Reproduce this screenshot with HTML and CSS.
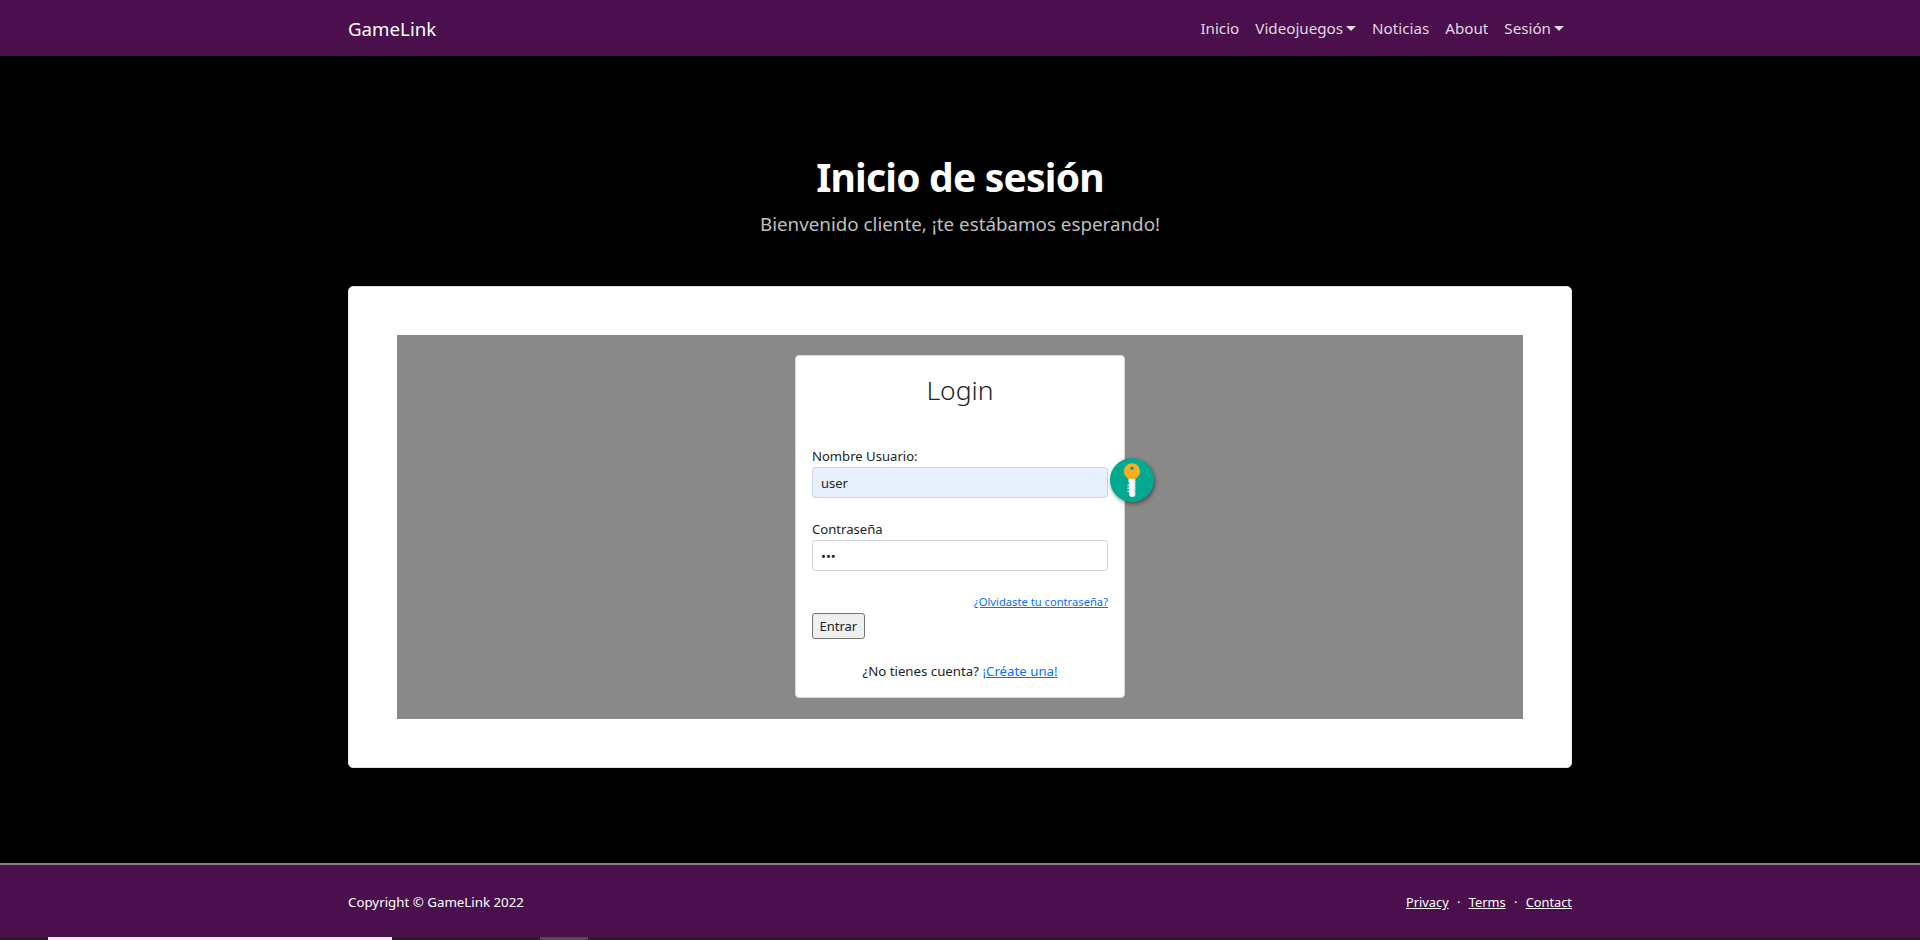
FILE: index.html
```html
<!DOCTYPE html>
<html lang="es">
<head>
    <meta charset="UTF-8">
    <title>GameLink - Inicio de sesión</title>
    <link rel="stylesheet" href="styles.css">
</head>
<body>
    <nav class="navbar">
        <div class="container navbar-inner">
            <a class="brand" href="#">GameLink</a>
            <ul class="nav-links">
                <li><a href="#">Inicio</a></li>
                <li><a class="dropdown" href="#">Videojuegos</a></li>
                <li><a href="#">Noticias</a></li>
                <li><a href="#">About</a></li>
                <li><a class="dropdown" href="#">Sesión</a></li>
            </ul>
        </div>
    </nav>

    <header class="hero">
        <h1>Inicio de sesión</h1>
        <p>Bienvenido cliente, ¡te estábamos esperando!</p>
    </header>

    <main class="container">
        <div class="panel">
            <div class="login-bg">
                <div class="login-card">
                    <h2>Login</h2>
                    <form>
                        <div class="field first">
                            <label for="user">Nombre Usuario:</label>
                            <input class="autofilled" type="text" id="user" value="user">
                            <span class="key-badge">
                                <svg width="44" height="44" viewBox="0 0 44 44">
                                    <path d="M18.500 20h6.700v17.500l-1.300 1.300h-3.300l-1.300-1.300v-3.300h-1.800v-1.400h1.800v-1.800h-1.800v-1.400h1.800v-1.800h-1.800v-1.400h1.800v-1.800h-.8z" fill="#fff"/>
                                    <path d="M23.600 20h1.600v17.500l-1.300 1.300h-.3z" fill="#e3e3e3"/>
                                    <path d="M22 5.300c4.400 0 8 3.500 8 7.900 0 3.600-2.400 6.600-5.700 7.700-.7.300-1.500.4-2.300.4s-1.600-.1-2.300-.4c-3.300-1.100-5.700-4.100-5.700-7.700 0-4.400 3.600-7.900 8-7.900z" fill="#fdb01f"/>
                                    <circle cx="22" cy="10.300" r="1.800" fill="#00a98f"/>
                                </svg>
                            </span>
                        </div>
                        <div class="field">
                            <label for="pass">Contraseña</label>
                            <input type="password" id="pass" value="123">
                        </div>
                        <div class="forgot"><a href="#">¿Olvidaste tu contraseña?</a></div>
                        <button type="button">Entrar</button>
                    </form>
                    <p class="signup">¿No tienes cuenta? <a href="#">¡Créate una!</a></p>
                </div>
            </div>
        </div>
    </main>

    <footer class="footer">
        <div class="container footer-inner">
            <span>Copyright © GameLink 2022</span>
            <span class="footer-links">
                <a href="#">Privacy</a>
                <span class="dot">·</span>
                <a href="#">Terms</a>
                <span class="dot">·</span>
                <a href="#">Contact</a>
            </span>
        </div>
    </footer>

    <div class="taskbar">
        <span class="task-white"></span>
        <span class="task-grey"></span>
    </div>
</body>
</html>
```

FILE: styles.css
```css
* {
    box-sizing: border-box;
}
html, body {
    height: 940px;
    overflow: hidden;
}
body {
    margin: 0;
    background-color: #000;
    color: #212529;
    font-family: "Noto Sans", "Open Sans", sans-serif;
    font-size: 16px;
    line-height: 1.5;
}
a {
    color: #0d6efd;
}
.container {
    width: 1248px;
    margin: 0 auto;
    padding: 0 12px;
}
.navbar {
    height: 56px;
    background-color: #4a0f4c;
}
.navbar-inner {
    display: flex;
    align-items: center;
    justify-content: space-between;
    height: 56px;
    padding-top: 1px;
}
.brand {
    padding-top: 2px;
    color: #fff;
    font-size: 18.700px;
    text-decoration: none;
}
.nav-links {
    display: flex;
    list-style: none;
    margin: 0;
    padding: 0;
}
.nav-links a {
    display: block;
    padding: 8px;
    color: rgba(255, 255, 255, .85);
    font-size: 15.200px;
    text-decoration: none;
}
.dropdown::after {
    content: "";
    display: inline-block;
    margin-left: 3px;
    vertical-align: 3px;
    border-top: 5px solid;
    border-left: 5px solid transparent;
    border-right: 5px solid transparent;
}
.hero {
    padding-top: 97px;
    height: 230px;
    text-align: center;
    color: #fff;
}
.hero h1 {
    margin: 0;
    font-size: 39px;
    font-weight: 700;
    line-height: 48px;
    letter-spacing: -.8px;
}
.hero p {
    margin: 9px 0 0;
    font-size: 18.800px;
    color: rgba(255, 255, 255, .75);
}
.panel {
    height: 482px;
    padding: 48px;
    background: #fff;
    border: 1px solid #e2e2e2;
    border-radius: 5px;
}
.login-bg {
    display: flex;
    justify-content: center;
    height: 384px;
    padding-top: 20px;
    background-color: #898989;
}
.login-card {
    width: 330px;
    height: 343px;
    padding: 17px 16px 0;
    background: #fff;
    border: 1px solid #d9d9d9;
    border-radius: 4px;
}
.login-card h2 {
    margin: 0 0 39px;
    font-size: 26.500px;
    font-weight: 300;
    line-height: 34px;
    text-align: center;
    color: #212529;
}
.field {
    position: relative;
    margin-bottom: 21px;
}
label {
    display: block;
    font-size: 13.100px;
    line-height: 21px;
}
input {
    display: block;
    width: 100%;
    height: 31px;
    padding: 4px 8px;
    border: 1px solid #ced4da;
    border-radius: 3px;
    background: #fff;
    color: #212529;
    font-family: inherit;
    font-size: 13px;
}
.autofilled {
    background-color: #e8f0fe;
}
.key-badge {
    position: absolute;
    right: -46px;
    top: 12px;
    width: 44px;
    height: 44px;
    border-radius: 50%;
    background-color: #00a98f;
    box-shadow: 1px 2px 4px rgba(0, 0, 0, .45);
}
.key-badge svg {
    display: block;
}
.forgot {
    margin-top: 22px;
    text-align: right;
    font-size: 11.200px;
    line-height: 18px;
}
button {
    display: block;
    margin-top: 2px;
    height: 26px;
    padding: 0 6.500px;
    background: #efefef;
    border: 1px solid #767676;
    border-radius: 3px;
    color: #212529;
    font-family: inherit;
    font-size: 13px;
}
.signup {
    margin: 22px 0 0;
    text-align: center;
    font-size: 13.250px;
    line-height: 21px;
}
.footer {
    position: absolute;
    top: 863px;
    left: 0;
    right: 0;
    height: 74px;
    background-color: #4a0f4c;
    border-top: 2px solid #808080;
    color: #fff;
    font-size: 13.300px;
}
.footer-inner {
    display: flex;
    align-items: center;
    justify-content: space-between;
    height: 72px;
    padding-top: 4px;
}
.footer-links {
    font-size: 12.800px;
}
.footer-links a {
    color: #fff;
}
.dot {
    margin: 0 5px;
}
.taskbar {
    position: absolute;
    top: 937px;
    left: 0;
    right: 0;
    height: 3px;
    background-color: #1c2620;
}
.task-white, .task-grey {
    position: absolute;
    top: 0;
    height: 3px;
}
.task-white {
    left: 48px;
    width: 344px;
    background-color: #f0f0f0;
}
.task-grey {
    left: 540px;
    width: 48px;
    background-color: #4a524d;
}
```
